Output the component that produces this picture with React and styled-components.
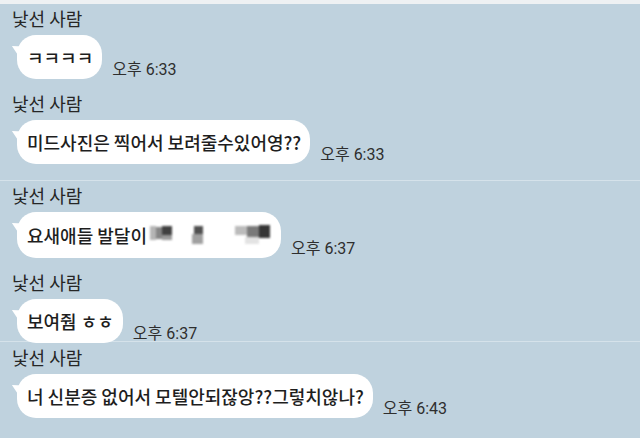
import React from 'react';
import styled, { createGlobalStyle } from 'styled-components';

const GlobalStyle = createGlobalStyle`
    html, body {
        margin: 0;
        padding: 0;
        background: #bfd2de;
    }
    body {
        font-family: "Roboto", "Noto Sans CJK KR", sans-serif;
        color: #1f1f1f;
    }
`

const Screen = styled.div`
    width: 640px;
    height: 438px;
    overflow: hidden;
    background: #bfd2de;
    border-top: 4px solid #eef1f3;
    box-sizing: border-box;
`

const Panel = styled.section`
    height: ${props => props.height}px;
    box-sizing: border-box;
    padding-top: ${props => props.pad}px;
    border-top: ${props => props.divided ? '1px solid #d5e2ea' : 'none'};
    display: flex;
    flex-direction: column;
    gap: 13px;
`

const Message = styled.div`
    padding-left: 12px;
`

const Name = styled.div`
    font-family: "Noto Sans CJK KR", sans-serif;
    font-size: 18px;
    line-height: 22px;
    color: #262626;
    margin-bottom: 6px;
`

const Row = styled.div`
    display: flex;
    align-items: flex-end;
`

const Bubble = styled.div`
    position: relative;
    margin-left: 5px;
    height: ${props => props.tall ? 46 : 44}px;
    padding: 0 9px 0 10px;
    background: #ffffff;
    border-radius: 19px;
    display: flex;
    align-items: center;
    font-family: "Noto Sans CJK KR", sans-serif;
    font-size: 18px;
    font-weight: 500;
    color: #1e1e1e;
    white-space: nowrap;
    &::before {
        content: "";
        position: absolute;
        left: -6px;
        top: 9px;
        width: 0;
        height: 0;
        border-top: 4px solid transparent;
        border-right: 10px solid #ffffff;
        border-bottom: 6px solid transparent;
        transform: rotate(25deg);
    }
`

const Time = styled.span`
    font-family: "Roboto", "Noto Sans CJK KR", sans-serif;
    font-size: 16px;
    color: #2e2e2e;
    margin-left: 10px;
    margin-bottom: -1px;
    white-space: nowrap;
`

const Censored = styled.svg`
    margin-left: 3px;
    filter: blur(0.9px);
`

const Mosaic = () => (
    <Censored width="122" height="24" viewBox="0 0 122 24">
        <rect x="0" y="3" width="6" height="14" fill="#b5b5b5" />
        <rect x="6" y="4" width="6" height="12" fill="#868686" />
        <rect x="12" y="3" width="10" height="9" fill="#404040" />
        <rect x="12" y="12" width="10" height="5" fill="#9a9a9a" />
        <rect x="44" y="3" width="9" height="8" fill="#505050" />
        <rect x="42" y="11" width="11" height="10" fill="#a0a0a0" />
        <rect x="85" y="3" width="12" height="9" fill="#bbbbbb" />
        <rect x="97" y="3" width="12" height="11" fill="#7a7a7a" />
        <rect x="109" y="2" width="11" height="13" fill="#353535" />
        <rect x="95" y="14" width="14" height="7" fill="#e3e3e3" />
    </Censored>
)

const messages = [
    [
        { text: 'ㅋㅋㅋㅋ', time: '오후 6:33' },
        { text: '미드사진은 찍어서 보려줄수있어영??', time: '오후 6:33' },
    ],
    [
        { text: '요새애들 발달이', time: '오후 6:37', censored: true },
        { text: '보여줨 ㅎㅎ', time: '오후 6:37' },
    ],
    [
        { text: '너 신분증 없어서 모텔안되잖앙??그렇치않나?', time: '오후 6:43' },
    ],
]

const panelSizes = [
    { height: 176, pad: 3 },
    { height: 161, pad: 3 },
    { height: 97, pad: 4 },
]

const App = () => {
    return (
        <>
            <GlobalStyle />
            <Screen>
                {messages.map((group, i) => (
                    <Panel key={i} divided={i > 0} height={panelSizes[i].height} pad={panelSizes[i].pad}>
                        {group.map((msg, j) => (
                            <Message key={j}>
                                <Name>낯선 사람</Name>
                                <Row>
                                    <Bubble tall={msg.censored}>
                                        {msg.text}
                                        {msg.censored && <Mosaic />}
                                    </Bubble>
                                    <Time>{msg.time}</Time>
                                </Row>
                            </Message>
                        ))}
                    </Panel>
                ))}
            </Screen>
        </>
    );
};

export default App;
